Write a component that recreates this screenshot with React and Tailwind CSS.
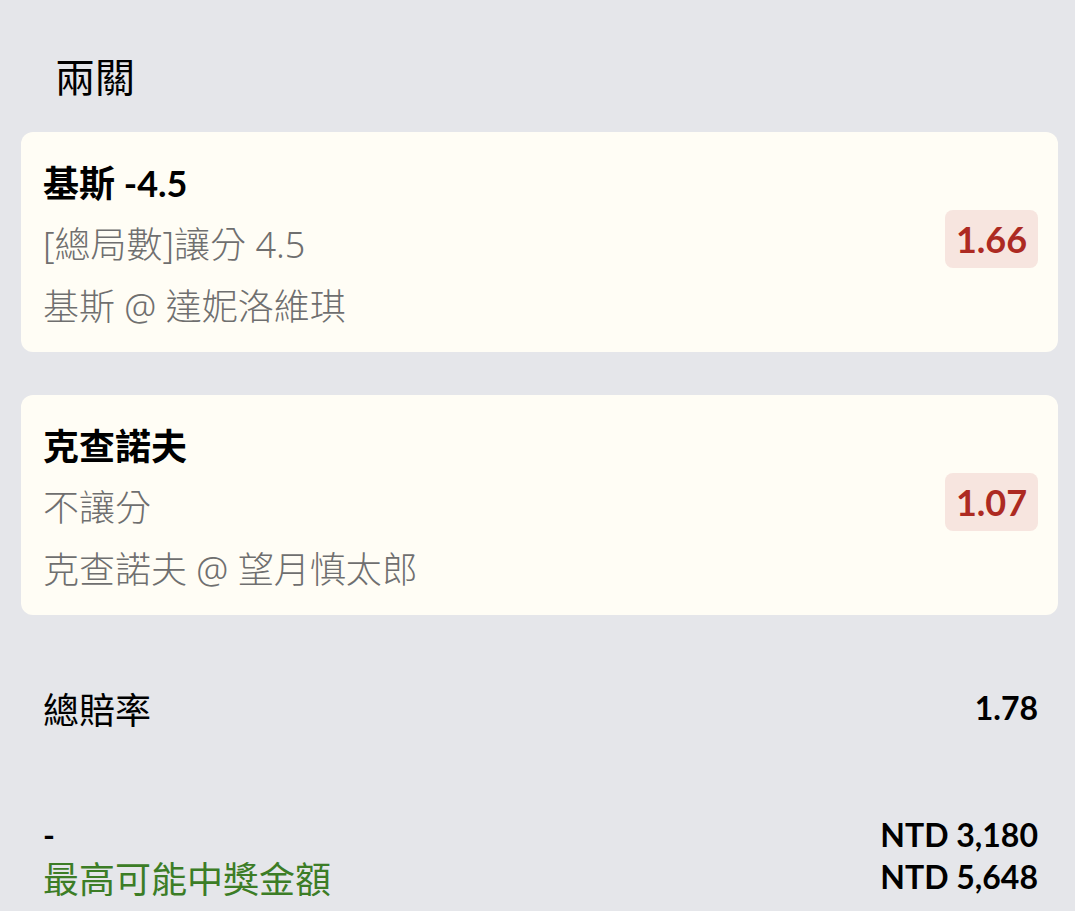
import React from "react";

const FONT = { fontFamily: "Lato, 'Noto Sans CJK TC', 'Noto Sans', sans-serif" };
const SYS = { fontFamily: "'Noto Sans CJK TC', 'Noto Sans', sans-serif" };
const GRAY = { fontFamily: "'Noto Sans', 'Noto Sans CJK TC', sans-serif" };

function Card({ title, sub, match, odds }) {
  return (
    <div className="flex items-center justify-between rounded-[12px] bg-[#fffdf5] pl-[22px] pr-[20px] pt-[20px] pb-[14px]">
      <div className="flex flex-col">
        <div className="text-[36px] leading-[62px] font-bold text-black">{title}</div>
        <div style={GRAY} className="text-[36px] leading-[62px] font-light text-[#6f6f6f]">{sub}</div>
        <div style={GRAY} className="text-[36px] leading-[62px] font-light text-[#6f6f6f]">{match}</div>
      </div>
      <div className="mb-[12px] flex h-[58px] w-[93px] items-center justify-center rounded-[8px] bg-[#f7e5df] text-[36px] font-bold text-[#ad2a22]">
        {odds}
      </div>
    </div>
  );
}

export default function App() {
  return (
    <div style={FONT} className="min-h-screen w-full bg-[#e5e6ea] pl-[21px] pr-[17px] pb-[20px] pt-[50px]">
      <div style={SYS} className="pl-[34px] text-[40px] leading-[50px] text-black">兩關</div>
      <div className="mt-[32px] flex flex-col gap-[43px]">
        <Card title="基斯 -4.5" sub="[總局數]讓分 4.5" match="基斯 @ 達妮洛維琪" odds="1.66" />
        <Card title="克查諾夫" sub="不讓分" match="克查諾夫 @ 望月慎太郎" odds="1.07" />
      </div>
      <div className="mt-[62px] flex items-center justify-between pl-[22px] pr-[20px] leading-[62px]">
        <span style={SYS} className="text-[36px] text-black">總賠率</span>
        <span className="text-[32px] font-bold text-black">1.78</span>
      </div>
      <div className="mt-[75px] flex items-start justify-between pl-[22px] pr-[20px]">
        <div className="flex flex-col">
          <span className="text-[32px] font-bold leading-[42px] text-black">-</span>
          <span style={SYS} className="text-[36px] leading-[42px] text-[#3c7d26]">最高可能中獎金額</span>
        </div>
        <div className="flex flex-col items-end">
          <span className="text-[32px] font-bold leading-[42px] text-black">NTD 3,180</span>
          <span className="text-[32px] font-bold leading-[42px] text-black">NTD 5,648</span>
        </div>
      </div>
    </div>
  );
}
